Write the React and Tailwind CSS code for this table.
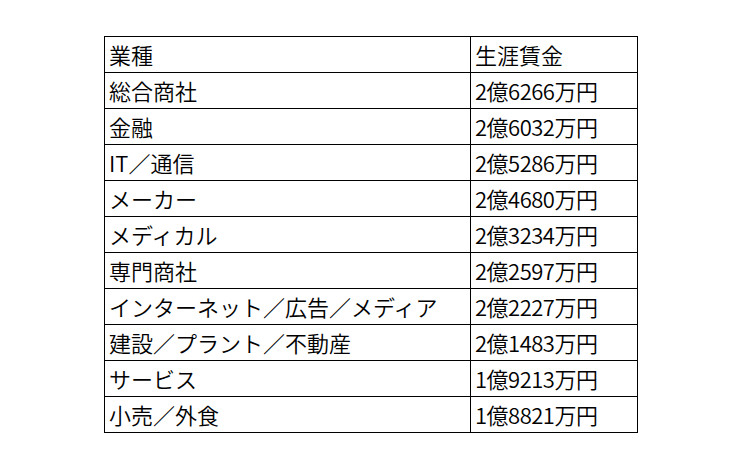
import React from "react";

const rows = [
  ["業種", "生涯賃金"],
  ["総合商社", "2億6266万円"],
  ["金融", "2億6032万円"],
  ["IT／通信", "2億5286万円"],
  ["メーカー", "2億4680万円"],
  ["メディカル", "2億3234万円"],
  ["専門商社", "2億2597万円"],
  ["インターネット／広告／メディア", "2億2227万円"],
  ["建設／プラント／不動産", "2億1483万円"],
  ["サービス", "1億9213万円"],
  ["小売／外食", "1億8821万円"],
];

export default function App() {
  return (
    <div className="w-[742px] h-[469px] bg-white pt-[36px] pl-[104px]" style={{ fontFamily: '"Noto Sans CJK JP", "Noto Sans", sans-serif' }}>
      <div className="w-[534px] border-l border-t border-black">
        {rows.map((r, i) => (
          <div key={i} className="flex h-[36px]">
            <div className="w-[366px] h-full border-r border-b border-black flex items-center pl-[4px] pb-[1px] text-[22px] font-[350] text-black leading-none whitespace-nowrap">
              {r[0]}
            </div>
            <div className={`w-[167px] h-full border-r border-b border-black flex items-center pl-[4px] pb-[1px] text-[22px] font-[350] text-black leading-none whitespace-nowrap ${i === 0 ? "" : "tracking-[-0.5px]"}`}>
              {r[1]}
            </div>
          </div>
        ))}
      </div>
    </div>
  );
}
